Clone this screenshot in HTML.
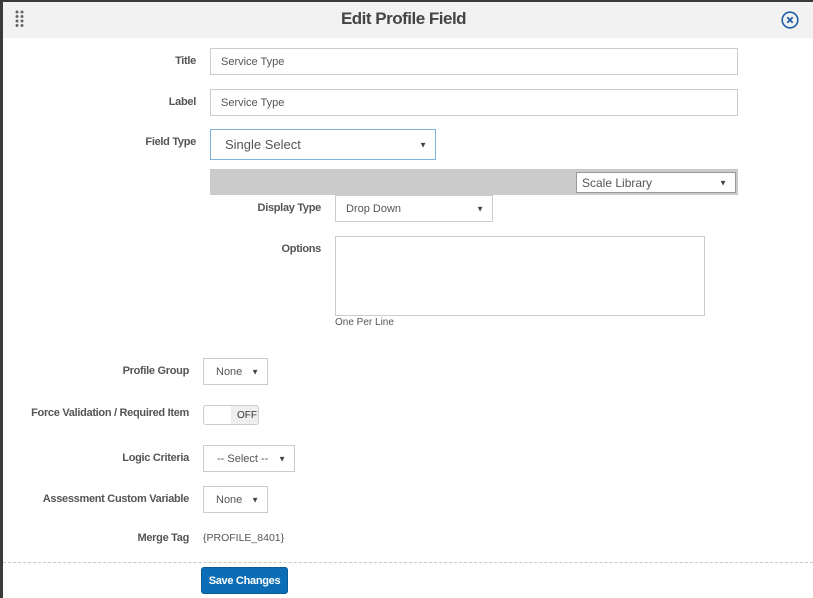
<!DOCTYPE html>
<html><head><style>
*{box-sizing:border-box;margin:0;padding:0}
body{width:813px;height:598px;background:#3a3a3a;font-family:"Liberation Sans",sans-serif;position:relative;overflow:hidden}
.modal{position:absolute;left:3px;top:2px;width:810px;height:596px;background:#fff}
.hd{position:absolute;left:0;top:0;width:810px;height:36px;background:#f2f2f2}
.a{position:absolute}
.lbl{position:absolute;font-size:11px;font-weight:bold;color:#555;text-align:right;letter-spacing:-0.3px}
.inp{position:absolute;border:1px solid #ccc;background:#fff;font-size:11px;color:#555;padding-left:10px;display:flex;align-items:center}
.arr{position:absolute;right:8px;top:50%;transform:translateY(-50%);font-size:8px;color:#444}
</style></head><body>
<div class="modal">
<div class="hd"></div>
</div>
<svg class="a" style="left:15px;top:10px" width="10" height="18"><g fill="#666"><circle cx="2" cy="2" r="1.5"/><circle cx="7" cy="2" r="1.5"/><circle cx="2" cy="6.5" r="1.5"/><circle cx="7" cy="6.5" r="1.5"/><circle cx="2" cy="11" r="1.5"/><circle cx="7" cy="11" r="1.5"/><circle cx="2" cy="15.5" r="1.5"/><circle cx="7" cy="15.5" r="1.5"/></g></svg>
<div class="a" style="left:0;top:9px;width:813px;text-align:center;font-size:17px;font-weight:bold;color:#444;letter-spacing:-0.5px"><span style="position:relative;left:-3px">Edit Profile Field</span></div>
<svg class="a" style="left:781px;top:11px" width="18" height="18"><circle cx="9" cy="9" r="7.8" fill="none" stroke="#1f5fa6" stroke-width="1.6"/><path d="M6.3 6.3L11.7 11.7M11.7 6.3L6.3 11.7" stroke="#1f5fa6" stroke-width="1.8"/></svg>

<div class="lbl" style="right:617px;top:55px">Title</div>
<div class="inp" style="left:210px;top:48px;width:528px;height:27px">Service Type</div>
<div class="lbl" style="right:617px;top:96px">Label</div>
<div class="inp" style="left:210px;top:89px;width:528px;height:27px">Service Type</div>
<div class="lbl" style="right:617px;top:136px">Field Type</div>
<div class="inp" style="left:210px;top:129px;width:226px;height:31px;border-color:#80b3dc;font-size:13px;padding-left:14px">Single Select<span class="arr">▼</span></div>

<div class="a" style="left:210px;top:169px;width:528px;height:26px;background:#cbcbcb"></div>
<div class="inp" style="left:576px;top:172px;width:160px;height:21px;font-size:12px;padding-left:5px;border-color:#999">Scale Library<span class="arr">▼</span></div>

<div class="lbl" style="right:492px;top:202px">Display Type</div>
<div class="inp" style="left:335px;top:195px;width:158px;height:27px">Drop Down<span class="arr">▼</span></div>
<div class="lbl" style="right:492px;top:243px">Options</div>
<div class="a" style="left:335px;top:236px;width:370px;height:80px;border:1px solid #ccc"></div>
<div class="a" style="left:335px;top:317px;font-size:10px;color:#555">One Per Line</div>

<div class="lbl" style="right:624px;top:365px">Profile Group</div>
<div class="inp" style="left:203px;top:358px;width:65px;height:27px;padding-left:12px">None<span class="arr">▼</span></div>
<div class="lbl" style="right:624px;top:407px">Force Validation / Required Item</div>
<div class="a" style="left:203px;top:405px;width:56px;height:20px;border:1px solid #ccc;border-radius:3px;background:#fff;overflow:hidden"><div class="a" style="left:27px;top:0;width:29px;height:20px;background:#eee;font-size:10px;color:#333;padding:4px 0 0 6px">OFF</div></div>
<div class="lbl" style="right:624px;top:452px">Logic Criteria</div>
<div class="inp" style="left:203px;top:445px;width:92px;height:27px;padding-left:13px">-- Select --<span class="arr">▼</span></div>
<div class="lbl" style="right:624px;top:493px">Assessment Custom Variable</div>
<div class="inp" style="left:203px;top:486px;width:65px;height:27px;padding-left:12px">None<span class="arr">▼</span></div>
<div class="lbl" style="right:624px;top:532px">Merge Tag</div>
<div class="a" style="left:203px;top:532px;font-size:10.5px;color:#555">{PROFILE_8401}</div>

<div class="a" style="left:3px;top:562px;width:810px;border-top:1px dashed #c8c8c8"></div>
<div class="a" style="left:201px;top:567px;width:87px;height:27px;background:#0a6db6;border:1px solid #0a5a96;border-radius:3px;color:#fff;font-size:11px;font-weight:bold;text-align:center;line-height:26px;letter-spacing:-0.3px">Save Changes</div>
</body></html>
